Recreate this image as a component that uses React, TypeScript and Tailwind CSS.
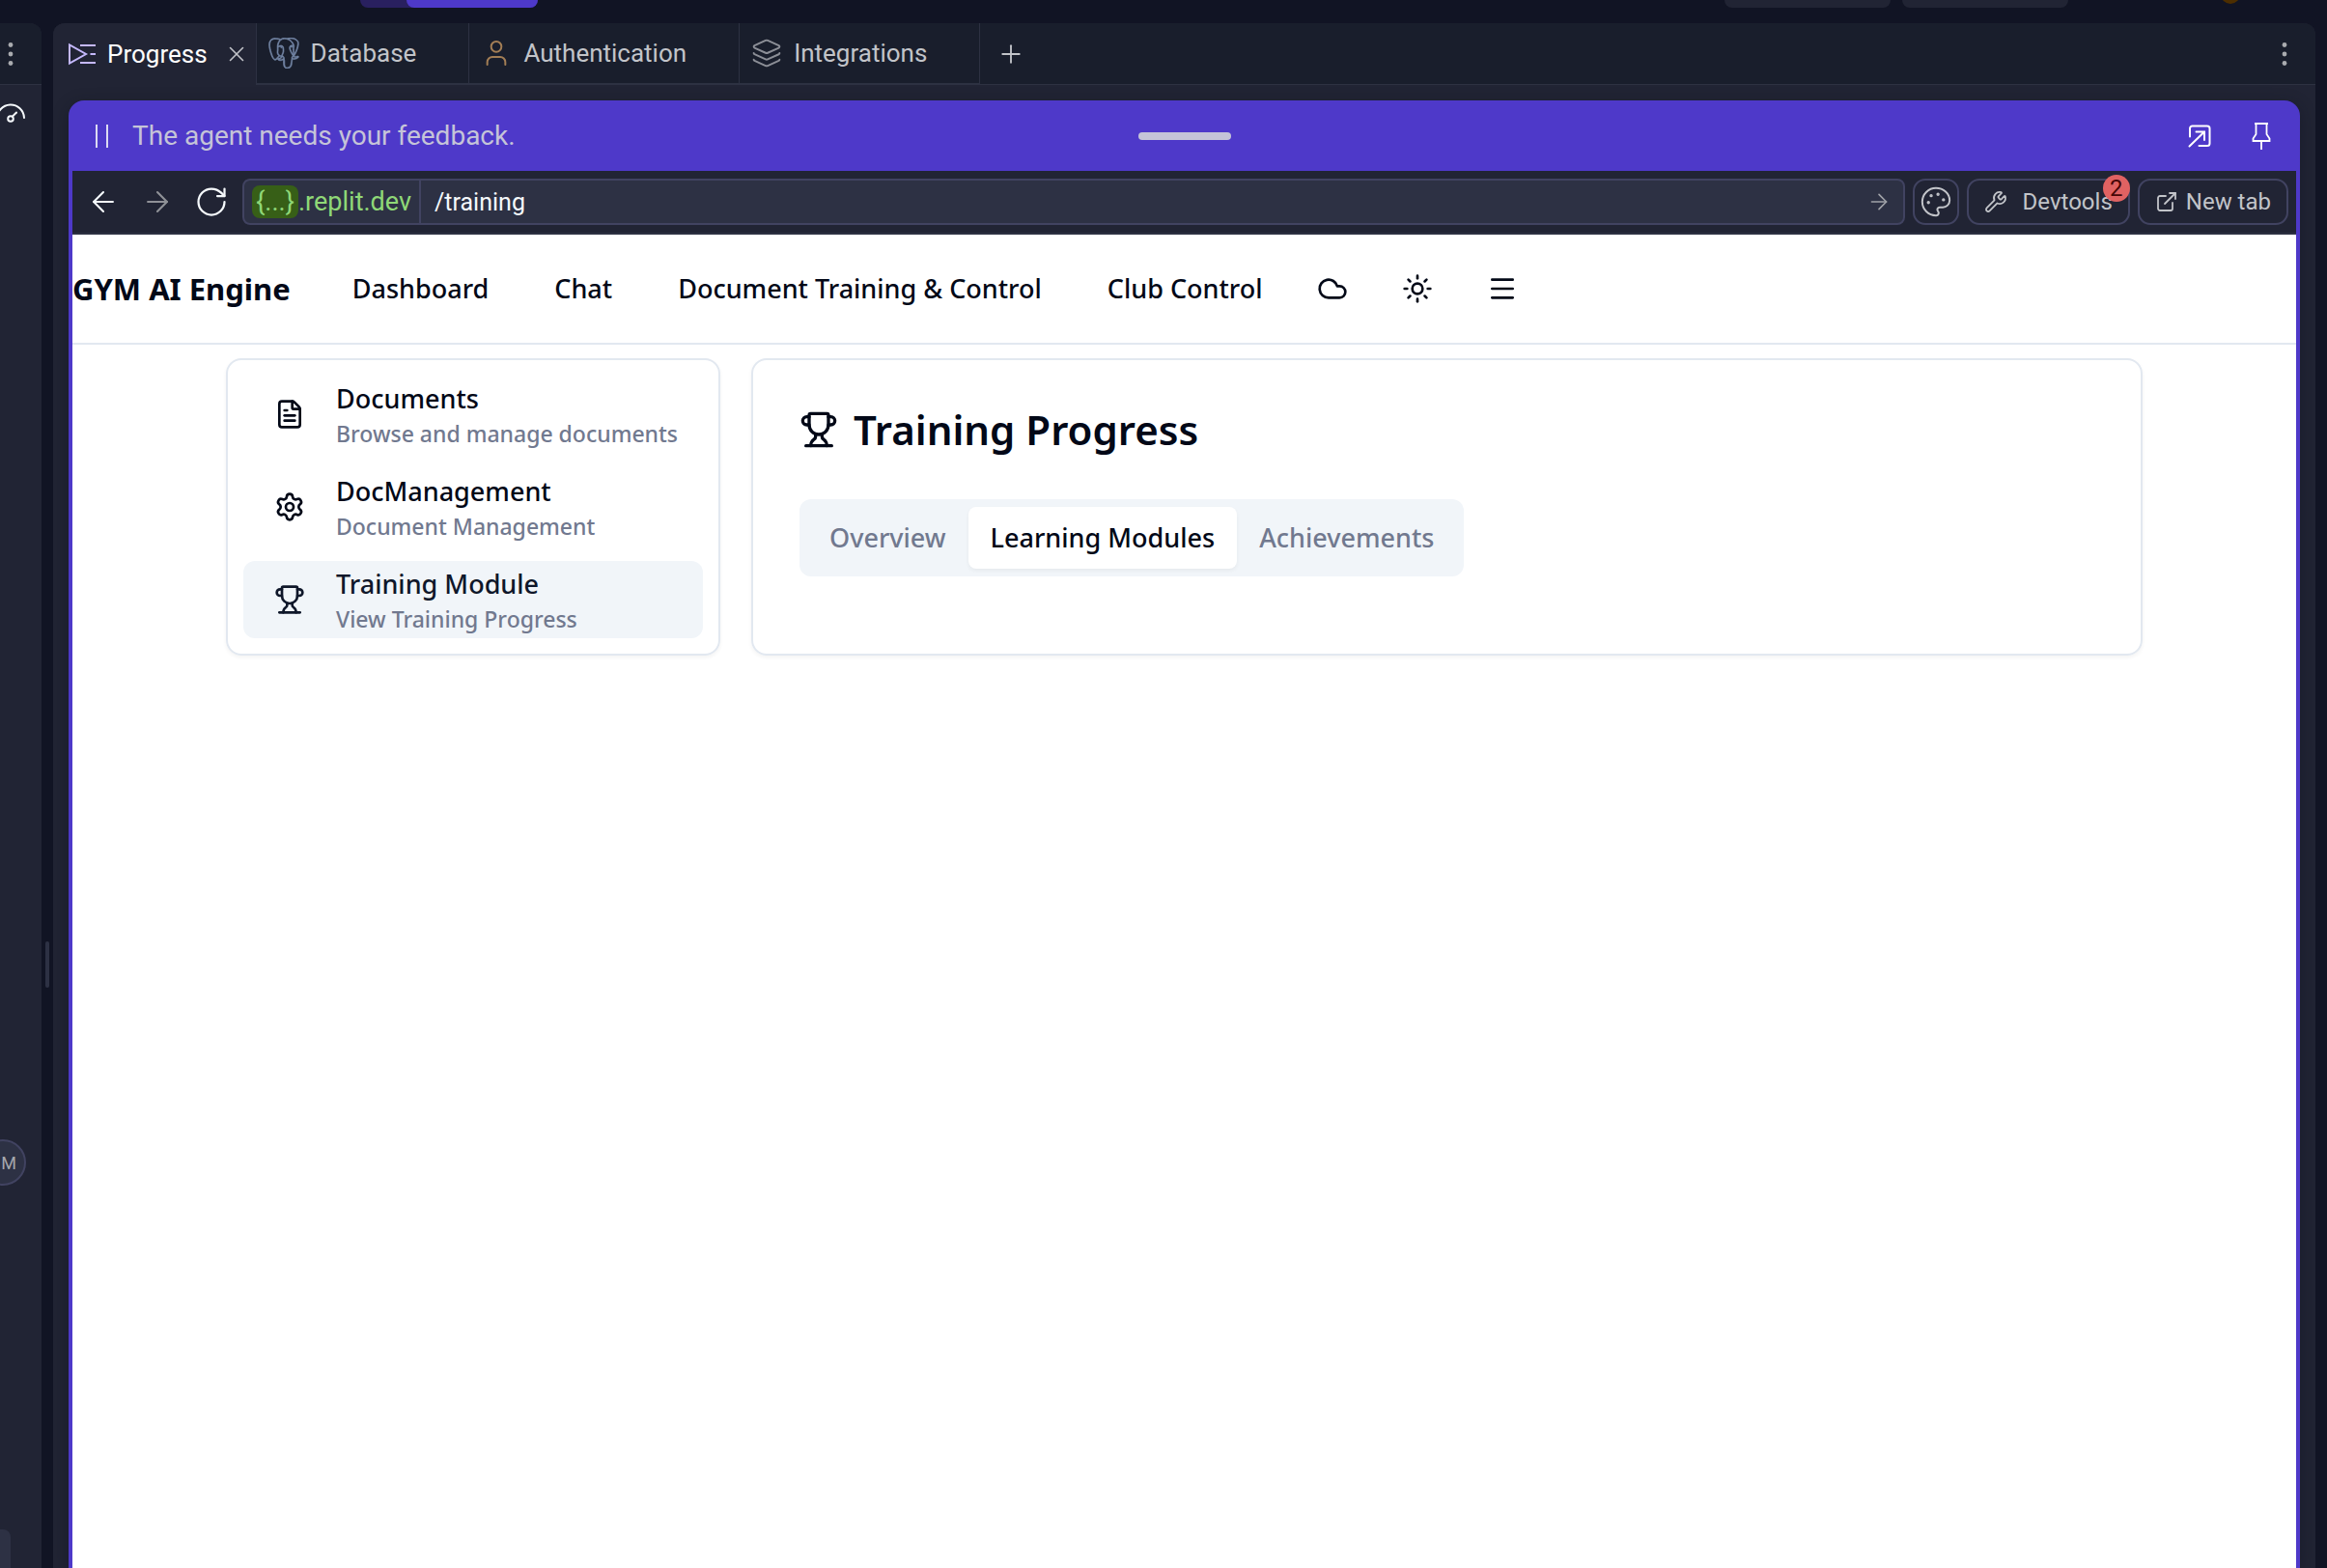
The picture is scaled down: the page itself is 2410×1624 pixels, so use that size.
import type { ReactNode } from 'react';
import {
  ArrowLeft,
  ArrowRight,
  Cloud,
  ExternalLink,
  FileText,
  Layers,
  Menu,
  Palette,
  Plus,
  RotateCw,
  Settings,
  Sun,
  Trophy,
  User,
  Wrench,
  X,
} from 'lucide-react';
import { SiPostgresql } from 'react-icons/si';

function ProgressIcon() {
  return (
    <svg width="32" height="32" viewBox="0 0 32 32" fill="none" stroke="#c4b8fb" strokeWidth="2" aria-hidden="true">
      <path d="M3 6.5v19L20 16z" />
      <path d="M14 7h16M24.5 16H30M14 25h16" />
    </svg>
  );
}

function DotsIcon() {
  return (
    <svg width="8" height="28" viewBox="0 0 8 28" fill="#a9abaf" aria-hidden="true">
      <circle cx="4" cy="4.5" r="2.4" />
      <circle cx="4" cy="14" r="2.4" />
      <circle cx="4" cy="23.5" r="2.4" />
    </svg>
  );
}

function GaugeIcon() {
  return (
    <svg width="30" height="22" viewBox="0 0 30 22" fill="none" stroke="#f5f9fc" strokeWidth="2" strokeLinecap="round" aria-hidden="true">
      <path d="M1 17a14 14 0 0 1 28-1" />
      <circle cx="15" cy="17" r="2.8" />
      <path d="m17 14.500 4-4" />
    </svg>
  );
}

function PopOutIcon() {
  return (
    <svg width="24" height="24" viewBox="0 0 24 24" fill="none" stroke="#fff" strokeWidth="2" strokeLinecap="round" aria-hidden="true">
      <path d="M2 12.500V4a2.500 2.500 0 0 1 2.500-2.500H20A2.500 2.500 0 0 1 22.500 4v15.500A2.500 2.500 0 0 1 20 22h-8.500" />
      <path d="M1.500 22.500 17 7.500M8.500 7.500H17V16" />
    </svg>
  );
}

function PinIcon() {
  return (
    <svg width="20" height="30" viewBox="0 0 20 30" fill="none" stroke="#fff" strokeWidth="1.800" aria-hidden="true">
      <path d="M3 2h14M4.500 2v11l-3 4.500v2.500h17v-2.500l-3-4.500V2M10 20v9" />
    </svg>
  );
}

function PauseIcon() {
  return (
    <svg width="16" height="24" viewBox="0 0 16 24" stroke="#dcdaf2" strokeWidth="2" aria-hidden="true">
      <path d="M3 0v24M14 0v24" />
    </svg>
  );
}

function PaneTab({ icon, label }: { icon: ReactNode; label: string }) {
  return (
    <button
      type="button"
      role="tab"
      aria-selected="false"
      className="flex h-full items-center gap-3 border-b-2 border-l border-[#2d3142] pr-[54px] pl-3 text-[26px] leading-8 text-[#c2c4c9]"
    >
      <span className="flex w-8 justify-center">{icon}</span>
      {label}
    </button>
  );
}

function SideItem({
  icon,
  title,
  note,
  active = false,
}: {
  icon: ReactNode;
  title: string;
  note: string;
  active?: boolean;
}) {
  return (
    <a
      href="#"
      aria-current={active ? 'page' : undefined}
      className={
        active
          ? 'flex h-20 items-center gap-8 rounded-xl bg-[#f1f5f9] pr-4 pl-8 text-[#0f172a]'
          : 'flex h-20 items-center gap-8 rounded-xl pr-4 pl-8'
      }
    >
      <span className="shrink-0">{icon}</span>
      <span className="flex flex-col whitespace-nowrap">
        <span className="text-[27px] leading-10 font-medium">{title}</span>
        <span className="text-[23px] leading-8 font-medium text-[#71798f]">{note}</span>
      </span>
    </a>
  );
}

const navLinks = ['Dashboard', 'Chat', 'Document Training & Control', 'Club Control'];

function Preview() {
  return (
    <div className="flex-1 bg-white font-['Noto_Sans',sans-serif] text-[#020817]">
      <header className="flex items-center gap-8 border-b-2 border-[#e2e8f0]">
        <span className="text-[31px] leading-[112px] font-bold whitespace-nowrap">GYM AI Engine</span>
        <div className="flex items-center">
          <nav className="flex items-center gap-1">
            {navLinks.map((label) => (
              <a key={label} href="#" className="px-8 text-[27px] leading-10 font-medium whitespace-nowrap">
                {label}
              </a>
            ))}
          </nav>
          <div className="flex items-center gap-2">
            <button type="button" aria-label="Cloud" className="flex size-20 items-center justify-center">
              <Cloud size={32} />
            </button>
            <button type="button" aria-label="Theme" className="flex size-20 items-center justify-center">
              <Sun size={32} />
            </button>
            <button type="button" aria-label="Menu" className="flex size-20 items-center justify-center">
              <Menu size={32} />
            </button>
          </div>
        </div>
      </header>

      <div className="grid grid-cols-[512px_1fr] gap-8 px-[159px] py-3.5">
        <aside className="flex flex-col gap-4 rounded-2xl border-2 border-[#e2e8f0] p-4 shadow-[0_2px_4px_rgba(0,0,0,0.05)]">
          <SideItem icon={<FileText size={32} />} title="Documents" note="Browse and manage documents" />
          <SideItem icon={<Settings size={32} />} title="DocManagement" note="Document Management" />
          <SideItem icon={<Trophy size={32} />} title="Training Module" note="View Training Progress" active />
        </aside>

        <main className="rounded-2xl border-2 border-[#e2e8f0] p-12 pb-20 shadow-[0_2px_4px_rgba(0,0,0,0.05)]">
          <h1 className="flex items-center gap-4 text-[42px] leading-12 font-semibold">
            <Trophy size={40} />
            Training Progress
          </h1>
          <div role="tablist" className="mt-12 inline-flex rounded-xl bg-[#f1f5f9] p-2 text-[27px] leading-10 font-medium">
            <button type="button" role="tab" aria-selected="false" className="h-16 rounded-lg px-[23px] text-[#71798f]">
              Overview
            </button>
            <button
              type="button"
              role="tab"
              aria-selected="true"
              className="h-16 rounded-lg bg-white px-[23px] shadow-[0_2px_4px_rgba(0,0,0,0.05)]"
            >
              Learning Modules
            </button>
            <button type="button" role="tab" aria-selected="false" className="h-16 rounded-lg px-[23px] text-[#71798f]">
              Achievements
            </button>
          </div>
        </main>
      </div>
    </div>
  );
}

export default function App() {
  return (
    <div className="flex h-screen flex-col overflow-hidden bg-[#111424] font-['Roboto',sans-serif] text-[#c2c4c9]">
      <div className="flex h-6 shrink-0 items-start justify-between pr-[90px] pl-[373px]">
        <div className="flex h-2 w-[184px] justify-end rounded-b-lg bg-[#29205f]">
          <div className="w-[136px] rounded-b-lg bg-[#4e39c9]" />
        </div>
        <div className="flex items-start">
          <div className="mr-3 h-2 w-[172px] rounded-b-lg bg-[#212434]" />
          <div className="mr-[158px] h-2 w-[172px] rounded-b-lg bg-[#212434]" />
          <div className="-mt-4 size-5 rounded-full bg-[#4d2e00]" />
        </div>
      </div>

      <div className="flex min-h-0 flex-1">
        <aside className="flex w-[43px] shrink-0 flex-col items-start overflow-hidden rounded-tr-xl bg-[#212434]">
          <div className="flex h-16 w-full shrink-0 items-center border-b border-[#2d3142] bg-[#191e2c] pl-[7px]">
            <button type="button" aria-label="Pane options">
              <DotsIcon />
            </button>
          </div>
          <div className="mt-[18px] -ml-1 shrink-0">
            <GaugeIcon />
          </div>
          <div className="mt-[1052px] -ml-[21px] flex size-12 shrink-0 items-center justify-end rounded-full border-2 border-[#414361] bg-[#2d3144] pr-2 text-[18px] text-[#a5a7ac]">
            M
          </div>
          <div className="mt-[356px] h-12 w-[11px] shrink-0 rounded-tr-lg bg-[#2d3144]" />
        </aside>

        <div className="w-3 shrink-0 px-1 pt-[951px]">
          <div className="h-12 rounded-full bg-[#2d3144]" />
        </div>

        <section className="mr-3 flex min-w-0 flex-1 flex-col overflow-hidden rounded-t-xl bg-[#212434]">
          <div role="tablist" className="flex h-16 shrink-0 bg-[#191e2c]">
            <div className="flex items-center bg-[#212434] pl-3.5">
              <button
                type="button"
                role="tab"
                aria-selected="true"
                className="flex items-center gap-2.5 text-[26px] leading-8 text-white"
              >
                <ProgressIcon />
                Progress
              </button>
              <button type="button" aria-label="Close tab" className="ml-2.5 flex w-10 justify-center">
                <X size={26} strokeWidth={1.5} />
              </button>
            </div>
            <PaneTab
              icon={<SiPostgresql size={32} color="#7588a8" stroke="#7588a8" strokeWidth={0.5} />}
              label="Database"
            />
            <PaneTab icon={<User size={34} strokeWidth={1.5} color="#a37e55" />} label="Authentication" />
            <PaneTab icon={<Layers size={34} strokeWidth={1.5} color="#8b8e96" />} label="Integrations" />
            <div className="flex flex-1 items-center justify-between border-b border-l border-[#2d3142]">
              <button type="button" aria-label="New pane tab" className="flex w-16 justify-center">
                <Plus size={30} strokeWidth={1.5} />
              </button>
              <button type="button" aria-label="Pane options" className="flex w-16 justify-center">
                <DotsIcon />
              </button>
            </div>
          </div>

          <div className="flex min-h-0 flex-1 flex-col px-4 pt-4">
            <div className="flex flex-1 flex-col rounded-t-2xl bg-[#4e39c9] shadow-[0_4px_16px_rgba(16,18,30,0.45)]">
              <div className="grid h-[73px] shrink-0 grid-cols-3 items-center px-5 text-[28px] leading-9">
                <div className="flex items-center gap-6 pl-1.5">
                  <button type="button" aria-label="Pause">
                    <PauseIcon />
                  </button>
                  <span className="whitespace-nowrap text-[#c5c4d8]">The agent needs your feedback.</span>
                </div>
                <div className="h-2 w-24 justify-self-center rounded-full bg-[#c5c4d8]" />
                <div className="flex items-center justify-end gap-6">
                  <button type="button" aria-label="Pop out" className="flex w-10 justify-center">
                    <PopOutIcon />
                  </button>
                  <button type="button" aria-label="Pin" className="flex w-10 justify-center">
                    <PinIcon />
                  </button>
                </div>
              </div>

              <div className="mx-1 flex min-h-0 flex-1 flex-col">
                <div className="flex shrink-0 items-center gap-2 border-b-2 border-[#2d3142] bg-[#212434] py-2 pr-2 pl-3 text-[24px] leading-8">
                  <div className="mr-1 flex items-center gap-4 text-[#f5f9fc]">
                    <button type="button" aria-label="Back" className="flex w-10 justify-center">
                      <ArrowLeft size={34} strokeWidth={1.5} />
                    </button>
                    <button type="button" aria-label="Forward" className="flex w-10 justify-center text-[#8f9197]">
                      <ArrowRight size={34} strokeWidth={1.5} />
                    </button>
                    <button type="button" aria-label="Reload" className="flex w-10 justify-center">
                      <RotateCw size={36} strokeWidth={1.5} />
                    </button>
                  </div>

                  <div className="flex h-12 min-w-0 flex-1 items-center rounded-lg border-2 border-[#414361] bg-[#2d3144] pr-3 pl-2">
                    <button type="button" className="flex items-center text-[27px] whitespace-nowrap text-[#8fd877]">
                      <span className="w-12 rounded-lg bg-[#375f17] text-center leading-[34px]">{'{...}'}</span>
                      .replit.dev
                    </button>
                    <div className="ml-2 h-full w-0.5 bg-[#414361]" />
                    <input
                      type="text"
                      aria-label="Path"
                      defaultValue="/training"
                      className="ml-3.5 h-full min-w-0 flex-1 bg-transparent text-[25px] text-[#f5f9fc] outline-none"
                    />
                    <button type="button" aria-label="Go" className="text-[#a0a2a8]">
                      <ArrowRight size={26} strokeWidth={1.5} />
                    </button>
                  </div>

                  <button
                    type="button"
                    aria-label="Theme editor"
                    className="flex size-12 items-center justify-center rounded-[13px] border-2 border-[#414361]"
                  >
                    <Palette size={34} strokeWidth={1.4} className="shrink-0" />
                  </button>
                  <button
                    type="button"
                    className="relative flex h-12 items-center gap-4 rounded-[13px] border-2 border-[#414361] px-4"
                  >
                    <Wrench size={24} strokeWidth={1.8} />
                    Devtools
                    <span className="absolute -top-1.5 -right-0.5 flex size-7 items-center justify-center rounded-full bg-[#e06262] text-[#470707]">
                      2
                    </span>
                  </button>
                  <button
                    type="button"
                    className="flex h-12 items-center gap-2 rounded-[13px] border-2 border-[#414361] px-4 whitespace-nowrap"
                  >
                    <ExternalLink size={24} strokeWidth={1.8} />
                    New tab
                  </button>
                </div>
                <Preview />
              </div>
            </div>
          </div>
        </section>
      </div>
    </div>
  );
}
